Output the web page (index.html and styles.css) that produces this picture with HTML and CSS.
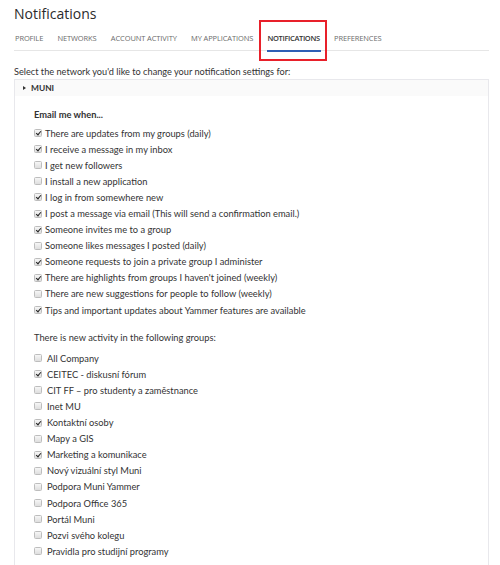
FILE: index.html
```html
<!DOCTYPE html>
<html>
<head>
<meta charset="utf-8">
<link rel="stylesheet" href="styles.css">
</head>
<body>
<div class="page">
  <h1 class="title">Notifications</h1>
  <nav class="tabs">
    <span class="tab">PROFILE</span>
    <span class="tab">NETWORKS</span>
    <span class="tab">ACCOUNT ACTIVITY</span>
    <span class="tab">MY APPLICATIONS</span>
    <span class="tab active">NOTIFICATIONS<span class="highlight"></span></span>
    <span class="tab">PREFERENCES</span>
  </nav>
  <p class="intro">Select the network you'd like to change your notification settings for:</p>
  <div class="panel">
    <div class="panel-head"><span class="caret"></span>MUNI</div>
    <div class="panel-body">
      <div class="section-title">Email me when...</div>
      <ul class="list email">
        <li><span class="cb on"></span>There are updates from my groups (daily)</li>
        <li><span class="cb on"></span>I receive a message in my inbox</li>
        <li><span class="cb"></span>I get new followers</li>
        <li><span class="cb"></span>I install a new application</li>
        <li><span class="cb on"></span>I log in from somewhere new</li>
        <li><span class="cb on"></span>I post a message via email (This will send a confirmation email.)</li>
        <li><span class="cb on"></span>Someone invites me to a group</li>
        <li><span class="cb"></span>Someone likes messages I posted (daily)</li>
        <li><span class="cb on"></span>Someone requests to join a private group I administer</li>
        <li><span class="cb on"></span>There are highlights from groups I haven't joined (weekly)</li>
        <li><span class="cb"></span>There are new suggestions for people to follow (weekly)</li>
        <li><span class="cb on"></span>Tips and important updates about Yammer features are available</li>
      </ul>
      <div class="section-sub">There is new activity in the following groups:</div>
      <ul class="list groups">
        <li><span class="cb"></span>All Company</li>
        <li><span class="cb on"></span>CEITEC - diskusní fórum</li>
        <li><span class="cb"></span>CIT FF – pro studenty a zaměstnance</li>
        <li><span class="cb"></span>Inet MU</li>
        <li><span class="cb on"></span>Kontaktní osoby</li>
        <li><span class="cb"></span>Mapy a GIS</li>
        <li><span class="cb on"></span>Marketing a komunikace</li>
        <li><span class="cb"></span>Nový vizuální styl Muni</li>
        <li><span class="cb"></span>Podpora Muni Yammer</li>
        <li><span class="cb"></span>Podpora Office 365</li>
        <li><span class="cb"></span>Portál Muni</li>
        <li><span class="cb"></span>Pozvi svého kolegu</li>
        <li><span class="cb"></span>Pravidla pro studijní programy</li>
      </ul>
    </div>
  </div>
</div>
</body>
</html>
```
FILE: styles.css
```css
html, body {
  margin: 0;
  padding: 0;
  background: #ffffff;
}
body {
  font-family: "Lato", "Open Sans", sans-serif;
  color: #333333;
  width: 500px;
  height: 565px;
  overflow: hidden;
}
.page {
  padding: 0 11px 0 14px;
}
.title {
  margin: 0;
  padding-top: 3px;
  font-family: "Open Sans", sans-serif;
  font-weight: 400;
  font-size: 14px;
  line-height: 22px;
  color: #2b2b2b;
}
.tabs {
  display: flex;
  margin-top: 5px;
  height: 20px;
  border-bottom: 1px solid #e6e6e6;
  font-family: "Open Sans", sans-serif;
  font-size: 7.5px;
  color: #6b6b6b;
}
.tab {
  position: relative;
  line-height: 16px;
  margin-right: 14.3px;
  letter-spacing: -0.12px;
}
.tab:first-child { margin-left: 1px; }
.tab.active {
  color: #333;
  font-weight: 600;
  letter-spacing: -0.35px;
}
.tab.active::before {
  content: "";
  position: absolute;
  left: -9px;
  right: -7px;
  top: -10px;
  bottom: -11px;
  border: 2px solid #e8202a;
}
.highlight {
  position: absolute;
  left: -1px;
  right: -1px;
  bottom: -2px;
  height: 2px;
  background: #2f5fb5;
}
.intro {
  margin: 15px 0 0;
  font-size: 9.2px;
  line-height: 12px;
}
.panel {
  margin-top: 1px;
  border: 1px solid #e8e8ec;
  border-bottom: none;
  height: 600px;
}
.panel-head {
  display: flex;
  align-items: center;
  height: 16px;
  padding-left: 8px;
  background: #fafafa;
  font-size: 8.4px;
  font-weight: 700;
  color: #333;
}
.caret {
  width: 0;
  height: 0;
  border-top: 2.5px solid transparent;
  border-bottom: 2.5px solid transparent;
  border-left: 3px solid #333;
  margin-right: 5px;
}
.panel-body {
  padding: 13px 0 0 19px;
}
.section-title {
  font-size: 9.3px;
  font-weight: 700;
  line-height: 12px;
  margin-bottom: 4px;
}
.section-sub {
  font-size: 9.3px;
  line-height: 12px;
  margin-top: 14px;
  margin-bottom: 6px;
}
.list {
  list-style: none;
  margin: 0;
  padding: 0;
  font-size: 9.3px;
}
.list li {
  display: flex;
  align-items: center;
  height: 16.1px;
}
.email .cb { margin-right: 3px; }
.groups .cb { margin-right: 5px; }
.cb {
  position: relative;
  box-sizing: border-box;
  width: 8px;
  height: 8px;
  border: 1px solid #bdbdbd;
  border-radius: 1.5px;
  background: linear-gradient(#f6f6f6, #dedede);
  flex: none;
}
.cb.on::after {
  content: "";
  position: absolute;
  left: 1.5px;
  top: 0px;
  width: 2px;
  height: 4px;
  border-right: 1.3px solid #222;
  border-bottom: 1.3px solid #222;
  transform: rotate(40deg);
}
```
